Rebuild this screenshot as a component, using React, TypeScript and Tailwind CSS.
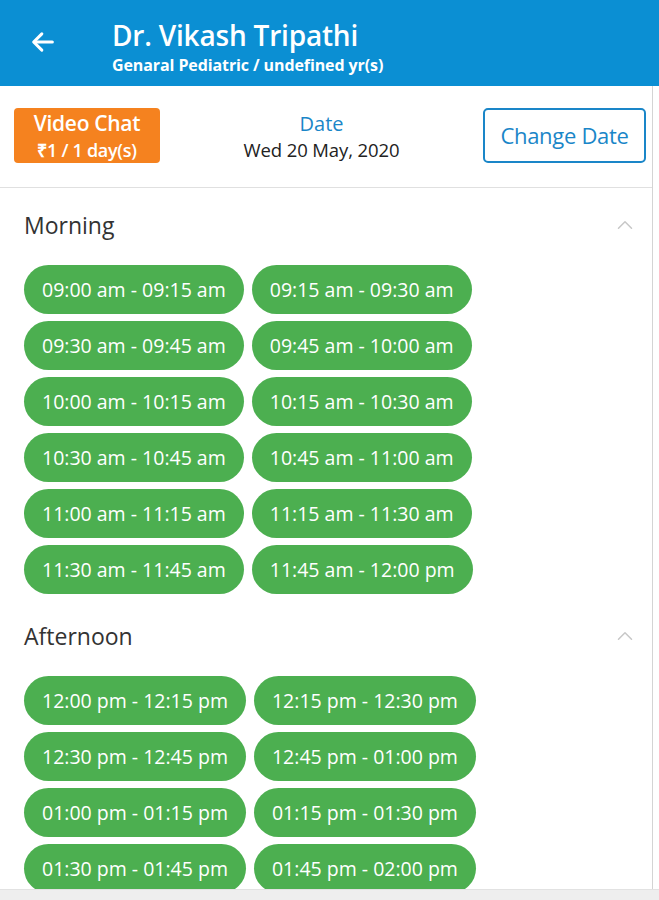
import { ChevronUp } from 'lucide-react'

const morning = [
  '09:00 am - 09:15 am',
  '09:15 am - 09:30 am',
  '09:30 am - 09:45 am',
  '09:45 am - 10:00 am',
  '10:00 am - 10:15 am',
  '10:15 am - 10:30 am',
  '10:30 am - 10:45 am',
  '10:45 am - 11:00 am',
  '11:00 am - 11:15 am',
  '11:15 am - 11:30 am',
  '11:30 am - 11:45 am',
  '11:45 am - 12:00 pm',
]

const afternoon = [
  '12:00 pm - 12:15 pm',
  '12:15 pm - 12:30 pm',
  '12:30 pm - 12:45 pm',
  '12:45 pm - 01:00 pm',
  '01:00 pm - 01:15 pm',
  '01:15 pm - 01:30 pm',
  '01:30 pm - 01:45 pm',
  '01:45 pm - 02:00 pm',
]

function SlotGroup({ title, slots }: { title: string; slots: string[] }) {
  return (
    <section>
      <div className="flex items-center justify-between pr-[14px]">
        <h2 className="text-[23px] leading-[28px] text-[#333]">{title}</h2>
        <ChevronUp className="w-[26px] h-[26px] text-[#c8c8c8]" strokeWidth={1.4} />
      </div>
      <div className="mt-[26px] flex flex-wrap gap-x-[8px] gap-y-[7px]">
        {slots.map((s) => (
          <button
            key={s}
            className="h-[49px] rounded-full bg-[#4caf50] px-[18px] text-[19.5px] text-white whitespace-nowrap"
          >
            {s}
          </button>
        ))}
      </div>
    </section>
  )
}

export default function App() {
  return (
    <div className="h-screen flex flex-col bg-white overflow-hidden" style={{ fontFamily: '"Open Sans", sans-serif' }}>
      <header className="h-[86px] shrink-0 bg-[#0b8fd3] flex items-start text-white">
        <div className="w-[112px] pl-[29px] pt-[28px]">
          <svg width="28" height="28" viewBox="0 0 24 24" fill="none" stroke="currentColor" strokeWidth="2.6" strokeLinecap="round" strokeLinejoin="round">
            <path d="M20 12H5" />
            <path d="M11 5l-7 7 7 7" />
          </svg>
        </div>
        <div className="pt-[16px]">
          <h1 className="text-[28px] leading-[38px] font-semibold tracking-[-0.2px]">Dr. Vikash Tripathi</h1>
          <p className="text-[16px] leading-[22px] font-bold tracking-[-0.1px]">Genaral Pediatric / undefined yr(s)</p>
        </div>
      </header>

      <main className="flex-1 min-h-0 w-[653px] border-r border-[#d4d4d4] overflow-hidden">
        <div className="flex items-center pl-[14px] pr-[6px] pt-[22px] pb-[24px] border-b border-[#e0e0e0]">
          <div className="w-[146px] h-[55px] rounded-[4px] bg-[#f5821f] text-white font-semibold flex flex-col items-center justify-center">
            <span className="text-[21px] leading-[29px] tracking-[-0.3px]">Video Chat</span>
            <span className="text-[18px] leading-[25px] tracking-[-0.3px]">₹1 / 1 day(s)</span>
          </div>
          <div className="flex-1 text-center">
            <div className="text-[20px] leading-[27px] text-[#1a86c8]">Date</div>
            <div className="text-[18.5px] leading-[25px] text-[#222] tracking-[-0.1px]">Wed 20 May, 2020</div>
          </div>
          <button className="w-[163px] h-[55px] rounded-[5px] border-2 border-[#1a86c8] text-[#1a86c8] text-[22px] font-medium tracking-[-0.3px]">
            Change Date
          </button>
        </div>

        <div className="pl-[24px] pt-[23px] flex flex-col gap-[28px]">
          <SlotGroup title="Morning" slots={morning} />
          <SlotGroup title="Afternoon" slots={afternoon} />
        </div>
      </main>

      <div className="h-[11px] shrink-0 bg-[#eeeeee] border-t border-[#e2e2e2]" />
    </div>
  )
}
